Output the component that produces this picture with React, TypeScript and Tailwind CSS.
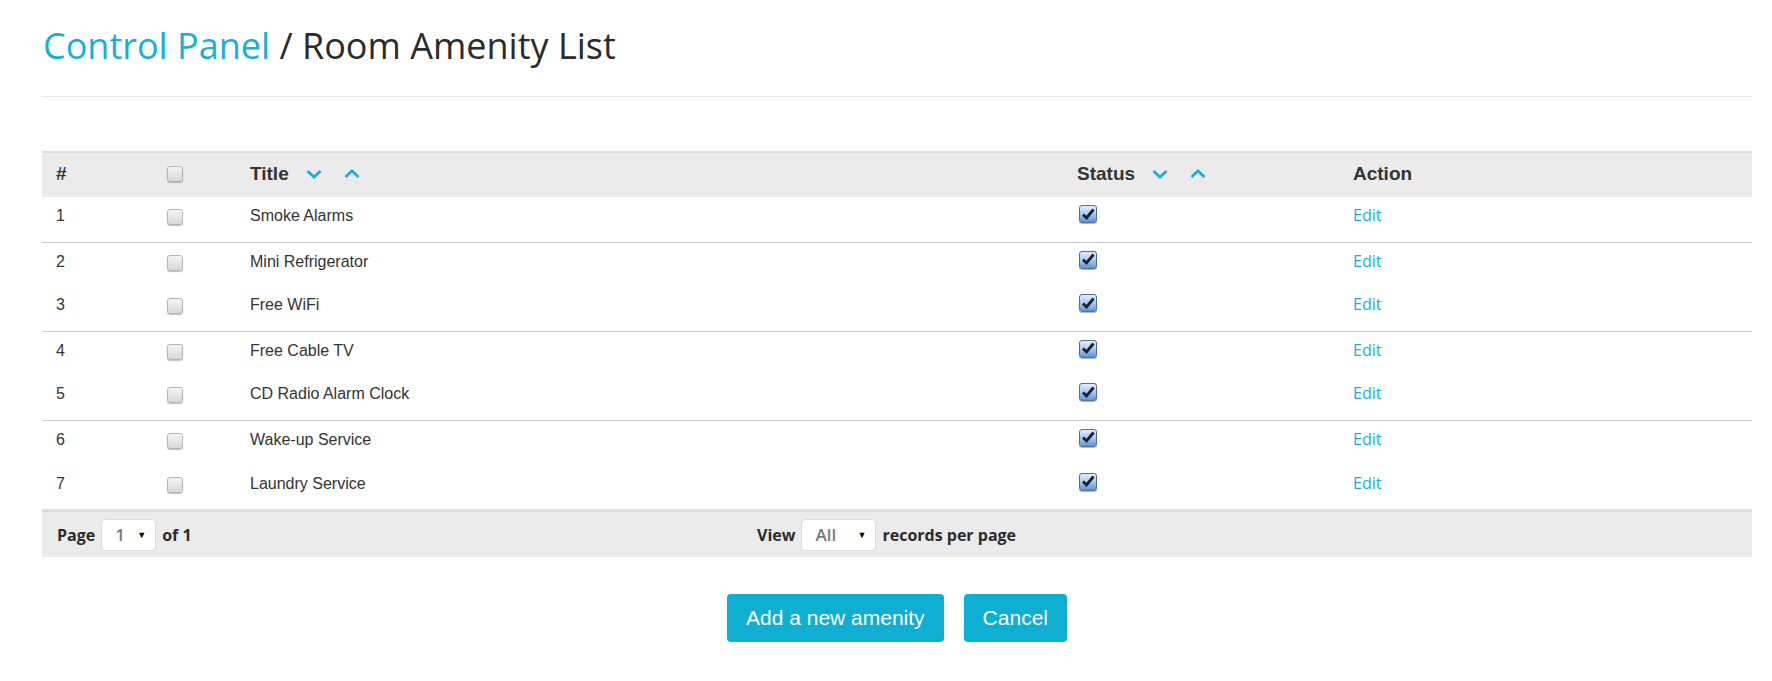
const amenities = [
  "Smoke Alarms",
  "Mini Refrigerator",
  "Free WiFi",
  "Free Cable TV",
  "CD Radio Alarm Clock",
  "Wake-up Service",
  "Laundry Service",
];

const cols = "grid grid-cols-[111px_83px_827px_276px_1fr]";

const SortArrows = () => (
  <span className="flex items-center h-[22px] gap-[22px] ml-[17px]">
    <svg width="16" height="10" viewBox="0 0 16 10">
      <polyline points="1.5,2 8,8 14.5,2" fill="none" stroke="#19afd4" strokeWidth="2.8" />
    </svg>
    <svg width="16" height="10" viewBox="0 0 16 10">
      <polyline points="1.5,8 8,2 14.5,8" fill="none" stroke="#19afd4" strokeWidth="2.8" />
    </svg>
  </span>
);

const Box = () => (
  <div className="w-[16px] h-[16px] rounded-[3px] border border-[#b4b4b4] bg-gradient-to-b from-[#f4f4f4] to-[#d8d8d8] shadow-[0_1px_1px_rgba(0,0,0,0.25)]" />
);

const CheckedBox = () => (
  <div className="w-[18px] h-[18px] rounded-[3px] border border-[#4d6f98] bg-gradient-to-b from-[#e2eefc] via-[#a9c9f2] to-[#5e93d8] shadow-[0_1px_1px_rgba(0,0,0,0.3)] flex items-center justify-center">
    <svg width="14" height="13" viewBox="0 0 14 13">
      <polyline points="2,6.5 5.5,10 12.5,1.5" fill="none" stroke="#17202c" strokeWidth="2.8" />
    </svg>
  </div>
);

const Select = ({ value, width }: { value: string; width: string }) => (
  <div
    className={`${width} h-[32px] mx-[6px] bg-white border border-[#dcdcdc] rounded-[4px] flex items-center justify-between pl-[13px] pr-[9px]`}
  >
    <span className="text-[#7a7a7a] font-semibold text-[17px]">{value}</span>
    <span className="text-[9px] text-black">▼</span>
  </div>
);

function App() {
  return (
    <div className="pl-[42px] pr-[20px] pb-[40px] bg-white min-h-screen font-['Liberation_Sans',Arial,sans-serif] text-[#333]">
      <h1 className="pt-[26px] text-[36px] leading-[40px] font-['Open_Sans',sans-serif] font-normal text-[#2b2b2b] pl-[1px]">
        <span className="text-[#19afd4]">Control Panel</span> / Room Amenity List
      </h1>
      <hr className="mt-[30px] border-0 border-t border-[#e8e8e8]" />

      <div className="mt-[54px]">
        <div className={`${cols} h-[46px] border-t-2 border-[#dcdcdc] bg-[#ebebeb] text-[19px] font-bold leading-[22px]`}>
          <div className="pl-[14px] pt-[10px]">#</div>
          <div className="pl-[14px] pt-[13px]">
            <Box />
          </div>
          <div className="pl-[14px] pt-[10px] flex items-start">
            Title
            <SortArrows />
          </div>
          <div className="pl-[14px] pt-[10px] flex items-start">
            Status
            <SortArrows />
          </div>
          <div className="pl-[14px] pt-[10px]">Action</div>
        </div>

        {amenities.map((name, i) => (
          <div
            key={name}
            className={`${cols} h-[44.6px] text-[16px] leading-[20px] ${
              i % 2 === 1 ? "border-t border-[#cccccc]" : ""
            }`}
          >
            <div className="pl-[14px] pt-[9px]">{i + 1}</div>
            <div className="pl-[14px] pt-[12px]">
              <Box />
            </div>
            <div className="pl-[14px] pt-[9px]">{name}</div>
            <div className="pl-[16px] pt-[8px]">
              <CheckedBox />
            </div>
            <div className="pl-[14px] pt-[8px]">
              <a href="#" className="font-['Open_Sans',sans-serif] text-[#19afd4]">
                Edit
              </a>
            </div>
          </div>
        ))}

        <div className="h-[48px] border-t-[3px] border-[#dcdcdc] bg-[#ebebeb] flex items-center pl-[15px] font-['Open_Sans',sans-serif] font-bold text-[16px] text-[#2b2b2b]">
          <div className="w-[700px] flex items-center">
            Page
            <Select value="1" width="w-[55px]" />
            of 1
          </div>
          <div className="flex items-center">
            View
            <Select value="All" width="w-[75px]" />
            records per page
          </div>
        </div>
      </div>

      <div className="mt-[37px] flex justify-center gap-[20px]">
        <button className="h-[48px] px-[19px] rounded-[4px] bg-[#0eafd2] text-white text-[21px]">
          Add a new amenity
        </button>
        <button className="h-[48px] px-[19px] rounded-[4px] bg-[#0eafd2] text-white text-[21px]">
          Cancel
        </button>
      </div>
    </div>
  );
}

export default App;
